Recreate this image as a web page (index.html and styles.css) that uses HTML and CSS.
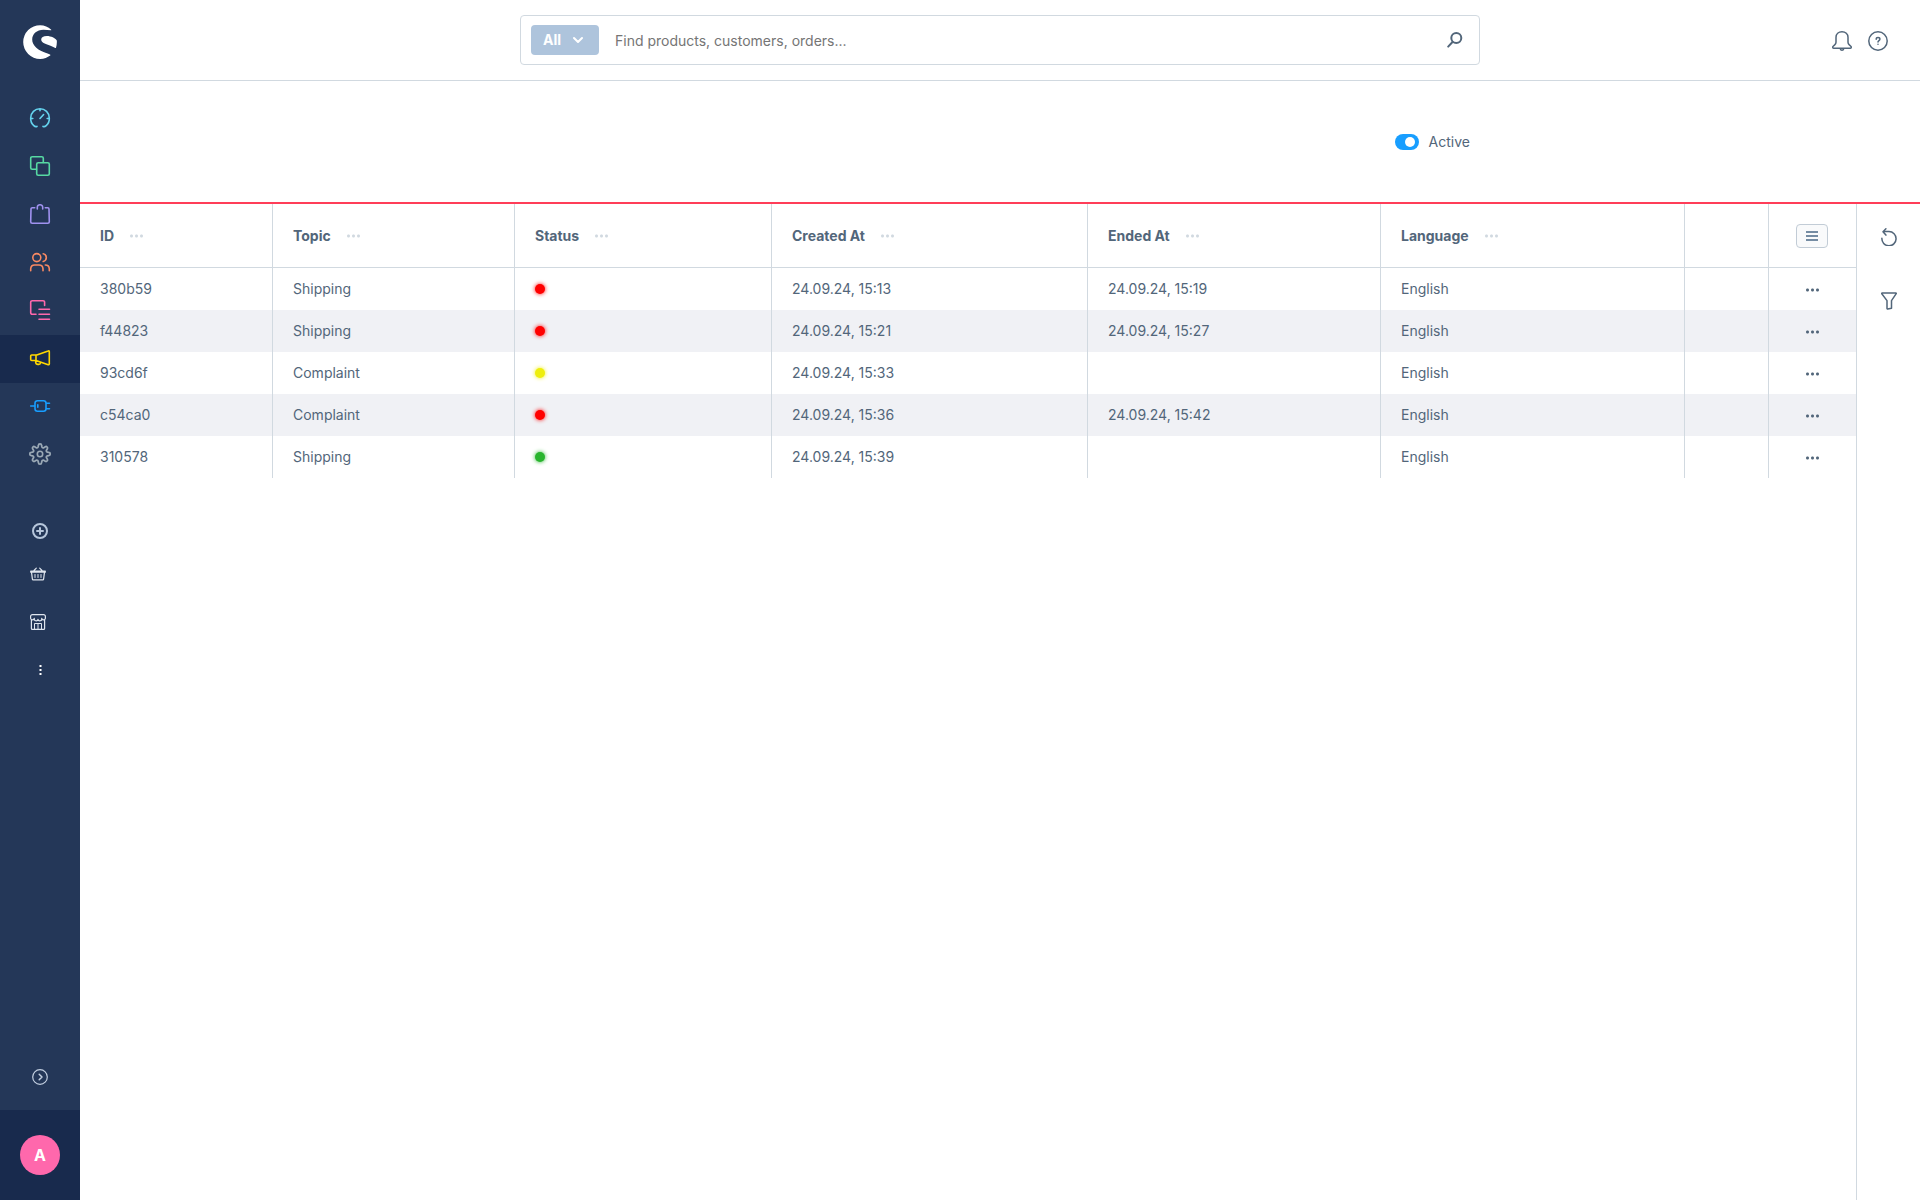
FILE: index.html
```html
<!DOCTYPE html>
<html lang="en">
<head>
<meta charset="utf-8">
<meta name="viewport" content="width=device-width, initial-scale=1">
<title>Administration</title>
<link rel="stylesheet" href="styles.css">
</head>
<body>
<div class="app">
  <aside class="menu">
    <a class="menu-logo" href="#" aria-label="Home">
      <svg width="34" height="34" viewBox="0 0 34 34" fill="#fff"><path d="M28 4.600C25.200 1.800 21.500 .2 17.200 .2A16.900 16.900 0 0 0 .2 17a16.900 16.900 0 0 0 17 16.900c3.900 0 7.400-1.400 10-3.400.3-.2.200-.7-.2-.9-6.600-2.700-10.500-3.900-13.700-6.800-2.700-2.400-4.100-5.200-4.100-8.200 0-5.500 4.500-9.800 11.300-9.800 2.400 0 5 .2 7.500.5.300 0 .4-.4 0-.7z"/><path d="M33.800 15.400c-1.600-2.200-5.700-4.400-9.900-4.400-3.600 0-5.700 1.300-5.700 3.500 0 1.700 1.200 2.900 3.500 4 2.800 1.300 7.600 2.700 10.600 4.400.3.200.6.100.7-.2.700-2.200 1-4.600.8-7.300z"/></svg>
    </a>
    <nav class="menu-main" aria-label="Main">
      <a class="menu-item cyan" href="#" aria-label="Dashboard"><svg class="icon" viewBox="0 0 20 20"><path d="M7 18.400c-1.200.500-2.300.1-3.200-.8A9.300 9.300 0 0 1 .7 10a9.300 9.300 0 0 1 18.600 0 9.300 9.300 0 0 1-3.100 7.600c-.9.900-2 1.300-3.200.8M10 .8v2M.8 10.500h2M17.200 10.500h2M10 10.500l3.600-4"/></svg></a>
      <a class="menu-item green" href="#" aria-label="Catalogues"><svg class="icon" viewBox="0 0 20 20"><rect x="6.700" y="6.700" width="12.600" height="12.600" rx="1.500"/><path d="M6.500 13.300H2.200a1.500 1.500 0 0 1-1.500-1.500V2.200A1.500 1.500 0 0 1 2.200.7h9.600a1.500 1.500 0 0 1 1.500 1.500v4.300"/></svg></a>
      <a class="menu-item violet" href="#" aria-label="Orders"><svg class="icon" viewBox="0 0 20 20"><path d="M4.700 3.700H2.300A1.300 1.300 0 0 0 1 5L.7 17.800a1.500 1.500 0 0 0 1.500 1.500h15.600a1.500 1.500 0 0 0 1.500-1.500L19 5a1.300 1.300 0 0 0-1.300-1.300h-2.400M7.300 5V3.200A2.500 2.500 0 0 1 10 .8a2.500 2.500 0 0 1 2.700 2.400V5"/></svg></a>
      <a class="menu-item orange" href="#" aria-label="Customers"><svg class="icon" viewBox="0 0 20 20"><circle cx="6.800" cy="5.600" r="4"/><path d="M.7 18.800v-2.100a4 4 0 0 1 4-3.700H9a4 4 0 0 1 4 3.700v2.100M13.200 1.700a4 4 0 0 1 0 7.800M15.300 13a4 4 0 0 1 4 3.700v2.100"/></svg></a>
      <a class="menu-item pink" href="#" aria-label="Content"><svg class="icon" viewBox="0 0 20 20"><path d="M6 14.300H2.200a1.500 1.500 0 0 1-1.500-1.500V2.200A1.500 1.500 0 0 1 2.200.7h10.900a1.500 1.500 0 0 1 1.500 1.500v3.300M9 9.300h10.500M9 14.300h10.500M9 19.300h10.500"/></svg></a>
      <a class="menu-item yellow active" href="#" aria-label="Marketing" aria-current="page"><svg class="icon" viewBox="0 0 20 20"><path d="M1.700 7H6v5.500H1.700a1 1 0 0 1-1-1V8a1 1 0 0 1 1-1zM6 7.200l12.200-4.300a.8.8 0 0 1 1.100.8v12.200a.8.8 0 0 1-1.100.8L6 12.500M5.700 12.700v1.500A2.300 2.300 0 0 0 8 16.400h.7a1.800 1.800 0 0 0 1.800-1.700v-.6"/></svg></a>
      <a class="menu-item blue" href="#" aria-label="Extensions"><svg class="icon" viewBox="0 0 20 20"><path d="M.7 10h4M7.500 4.700h6a2.500 2.500 0 0 1 2.500 2.500v5.600a2.500 2.500 0 0 1-2.500 2.500h-6a2.500 2.500 0 0 1-2.500-2.500V7.200a2.500 2.500 0 0 1 2.500-2.500zM16 7.300h3.500M16 12.700h3.500M7.800 8.800v2.400"/></svg></a>
      <a class="menu-item grey" href="#" aria-label="Settings"><svg class="icon" viewBox="0 0 20 20"><circle cx="10" cy="10" r="2.700"/><path d="M8.600 2.100a1.400 1.400 0 0 1 2.800 0l.3 1.300a1.300 1.300 0 0 0 1.900.8l1.200-.8a1.400 1.400 0 0 1 1.900 1.900l-.8 1.200a1.300 1.300 0 0 0 .8 1.900l1.200.2a1.400 1.400 0 0 1 0 2.800l-1.200.2a1.300 1.300 0 0 0-.8 1.900l.8 1.200a1.400 1.400 0 0 1-1.900 1.900l-1.200-.8a1.300 1.300 0 0 0-1.900.8l-.3 1.300a1.400 1.400 0 0 1-2.800 0l-.3-1.300a1.300 1.300 0 0 0-1.900-.8l-1.200.8a1.400 1.400 0 0 1-1.900-1.900l.8-1.200a1.300 1.300 0 0 0-.8-1.900l-1.200-.2a1.400 1.400 0 0 1 0-2.800l1.200-.2a1.300 1.300 0 0 0 .8-1.900l-.8-1.200a1.400 1.400 0 0 1 1.900-1.900l1.200.8a1.300 1.300 0 0 0 1.900-.8z" transform="translate(10 10) scale(1.100) translate(-10 -10)"/></svg></a>
    </nav>
    <nav class="menu-channels" aria-label="Sales channels">
      <button class="menu-add" type="button" aria-label="Add sales channel"><svg width="16" height="16" viewBox="0 0 16 16" fill="none" stroke="#b6c6db" stroke-width="2" stroke-linecap="round"><circle cx="8" cy="8" r="7"/><path d="M8 5v6M5 8h6"/></svg></button>
      <a class="menu-channel" href="#" aria-label="Storefront basket"><svg width="16" height="16" viewBox="0 0 16 16" fill="none" stroke="#dfe5ee" stroke-width="1.200" stroke-linecap="round" stroke-linejoin="round"><path d="M.7 5h14.600v1.200H.7zM1.500 6.200l.9 6.900a.8.8 0 0 0 .8.700h9.600a.8.8 0 0 0 .8-.7l.9-6.900M4 4.500l2.300-2.300M12 4.500L9.700 2.200"/><path d="M5 8.500v3M8 8.500v3M11 8.500v3" stroke-width="1"/></svg></a>
      <a class="menu-channel" href="#" aria-label="Storefront"><svg width="16" height="16" viewBox="0 0 16 16" fill="none" stroke="#dfe5ee" stroke-width="1.200" stroke-linecap="round" stroke-linejoin="round"><path d="M1.400 6v8.400a1 1 0 0 0 1 1h11.200a1 1 0 0 0 1-1V6M2.400.6h11.200a1.800 1.800 0 0 1 1.800 1.800v2a1.900 1.900 0 0 1-3.700 0 1.900 1.900 0 0 1-3.700 1 1.900 1.900 0 0 1-3.700-1 1.900 1.900 0 0 1-3.700 0v-2A1.800 1.800 0 0 1 2.400.6z"/><path d="M4.500 15.200V9.500h7v5.700M8 9.500v5.700" stroke-width="1"/></svg></a>
      <button class="menu-more" type="button" aria-label="More"><svg width="16" height="16" viewBox="0 0 16 16" fill="#fff"><path d="M7.500 3h2v2h-2zM7.500 7h2v2h-2zM7.500 11h2v2h-2z"/></svg></button>
    </nav>
    <button class="menu-expand" type="button" aria-label="Expand menu"><svg width="16" height="16" viewBox="0 0 16 16" fill="none" stroke="#c3cfe0" stroke-width="1.200" stroke-linecap="round" stroke-linejoin="round"><circle cx="8" cy="8" r="7.300"/><path d="M7.200 5.200L10 8l-2.800 2.800" stroke-width="1.500"/></svg></button>
    <div class="menu-user"><button class="avatar" type="button" aria-label="User menu">A</button></div>
  </aside>

  <div class="page">
    <header class="topbar">
      <form class="search" role="search">
        <button class="search-type" type="button">All
          <svg width="10" height="8" viewBox="0 0 10 8" fill="none" stroke="#fff" stroke-width="2" stroke-linecap="round" stroke-linejoin="round"><path d="M1 2l4 4 4-4"/></svg>
        </button>
        <input class="search-input" type="text" aria-label="Search" placeholder="Find products, customers, orders...">
        <button class="plain" type="submit" aria-label="Search"><svg width="16" height="16" viewBox="0 0 16 16" fill="none" stroke="#52667a" stroke-width="2" stroke-linecap="round"><circle cx="9.300" cy="6" r="5"/><path d="M5.500 10L1.200 14.600"/></svg></button>
      </form>
      <div class="topbar-actions">
        <button class="plain" type="button" aria-label="Notifications"><svg width="20" height="20" viewBox="0 0 20 20" fill="none" stroke="#52667a" stroke-width="1.500" stroke-linecap="round" stroke-linejoin="round"><path d="M10 .8c-3.500 0-6 2.200-6 5.500v5c0 1.200-.4 1.900-1.300 2.600l-1.500 1.300c-.9.800-.5 2 .6 2h16.400c1.100 0 1.500-1.200.6-2l-1.500-1.300c-.9-.7-1.300-1.400-1.300-2.600v-5C16 3 13.500.8 10 .8z"/><path d="M8.300 17.800c.2.900.8 1.400 1.700 1.400s1.500-.5 1.700-1.400"/></svg></button>
        <button class="plain" type="button" aria-label="Help"><svg width="20" height="20" viewBox="0 0 20 20" fill="none" stroke="#52667a" stroke-width="1.500" stroke-linecap="round" stroke-linejoin="round"><circle cx="10" cy="10" r="9.200"/><path d="M8.200 8.300c0-1.100.8-1.700 1.800-1.700s1.900.6 1.900 1.600c0 1.300-1.900 1.400-1.900 2.700M10 13.200v.1"/></svg></button>
      </div>
    </header>

    <div class="smartbar">
      <label class="switch"><input class="switch-input" type="checkbox" checked> Active</label>
    </div>

    <main class="content">
      <div class="grid-wrap">
        <table class="grid">
          <colgroup><col class="c-id"><col class="c-topic"><col class="c-status"><col class="c-created"><col class="c-ended"><col class="c-lang"><col class="c-blank"><col class="c-actions"></colgroup>
          <thead>
            <tr>
              <th scope="col"><span class="head">ID <button class="dots" type="button" aria-label="ID options"></button></span></th>
              <th scope="col"><span class="head">Topic <button class="dots" type="button" aria-label="Topic options"></button></span></th>
              <th scope="col"><span class="head">Status <button class="dots" type="button" aria-label="Status options"></button></span></th>
              <th scope="col"><span class="head">Created At <button class="dots" type="button" aria-label="Created At options"></button></span></th>
              <th scope="col"><span class="head">Ended At <button class="dots" type="button" aria-label="Ended At options"></button></span></th>
              <th scope="col"><span class="head">Language <button class="dots" type="button" aria-label="Language options"></button></span></th>
              <td></td>
              <td class="actions"><button class="columns" type="button" aria-label="Table settings"><svg width="12" height="10" viewBox="0 0 12 10" fill="#758ca3"><path d="M0 0h12v2H0zM0 4h12v2H0zM0 8h12v2H0z"/></svg></button></td>
            </tr>
          </thead>
          <tbody>
            <tr><td>380b59</td><td>Shipping</td><td><span class="status red" role="img" aria-label="Closed"></span></td><td>24.09.24, 15:13</td><td>24.09.24, 15:19</td><td>English</td><td></td><td class="actions"><button class="dots dark" type="button" aria-label="Row actions"></button></td></tr>
            <tr><td>f44823</td><td>Shipping</td><td><span class="status red" role="img" aria-label="Closed"></span></td><td>24.09.24, 15:21</td><td>24.09.24, 15:27</td><td>English</td><td></td><td class="actions"><button class="dots dark" type="button" aria-label="Row actions"></button></td></tr>
            <tr><td>93cd6f</td><td>Complaint</td><td><span class="status amber" role="img" aria-label="Waiting"></span></td><td>24.09.24, 15:33</td><td></td><td>English</td><td></td><td class="actions"><button class="dots dark" type="button" aria-label="Row actions"></button></td></tr>
            <tr><td>c54ca0</td><td>Complaint</td><td><span class="status red" role="img" aria-label="Closed"></span></td><td>24.09.24, 15:36</td><td>24.09.24, 15:42</td><td>English</td><td></td><td class="actions"><button class="dots dark" type="button" aria-label="Row actions"></button></td></tr>
            <tr><td>310578</td><td>Shipping</td><td><span class="status open" role="img" aria-label="Open"></span></td><td>24.09.24, 15:39</td><td></td><td>English</td><td></td><td class="actions"><button class="dots dark" type="button" aria-label="Row actions"></button></td></tr>
          </tbody>
        </table>
      </div>
      <aside class="rail">
        <button class="rail-button" type="button" aria-label="Refresh"><svg width="16" height="18" viewBox="0 0 16 18" fill="none" stroke="#52667a" stroke-width="1.500" stroke-linecap="round" stroke-linejoin="round"><path d="M.9 10.200A7.100 7.100 0 1 0 8 3.600H2.200M4.900.8L2 3.700l2.900 3.400"/></svg></button>
        <button class="rail-button" type="button" aria-label="Filter"><svg width="16" height="18" viewBox="0 0 16 18" fill="none" stroke="#52667a" stroke-width="1.500" stroke-linecap="round" stroke-linejoin="round"><path d="M1.100 1h13.800c.4 0 .5.400.3.700l-4.700 6.900v7.600l-3.800.8c-.4.100-.7-.1-.7-.5V8.600L.8 1.700C.6 1.400.7 1 1.100 1z"/></svg></button>
      </aside>
    </main>
  </div>
</div>
</body>
</html>
```
FILE: styles.css
```css
* { box-sizing: border-box; }

body {
  margin: 0;
  background: #fff;
  color: #52667a;
  font: 14px/20px Inter, "Liberation Sans", sans-serif;
}

button {
  margin: 0;
  padding: 0;
  border: 0;
  background: none;
  color: inherit;
  font: inherit;
  cursor: pointer;
}

svg { display: block; }

.app { display: flex; min-height: 100vh; }

/* Main menu */
.menu {
  display: flex;
  flex-direction: column;
  flex: none;
  width: 80px;
  background: #243758;
}

.menu-logo { padding: 25px 23px 36px; }

.menu-item {
  display: flex;
  justify-content: center;
  height: 48px;
  padding-top: 13px;
}

.menu-item.active { background: #182a4d; }

.icon {
  width: 20px;
  height: 20px;
  fill: none;
  stroke: currentColor;
  stroke-width: 1.6;
  stroke-linecap: round;
  stroke-linejoin: round;
  overflow: visible;
}

.cyan { color: #65d3ee; }
.green { color: #57d9a3; }
.violet { color: #a092f0; }
.orange { color: #f88962; }
.pink { color: #ff68ac; }
.yellow { color: #ffd700; }
.blue { color: #189eff; }
.grey { color: #9aa8b5; }

.menu-channels {
  display: flex;
  flex-direction: column;
  margin-top: 33px;
}

.menu-add,
.menu-channel,
.menu-more {
  display: flex;
  align-items: center;
  justify-content: center;
  height: 48px;
}

.menu-add { height: 38px; }

.menu-channel { justify-content: flex-start; padding-left: 30px; }

.menu-expand {
  display: flex;
  justify-content: center;
  margin-top: auto;
  padding: 16px 0 25px;
}

.menu-user {
  display: flex;
  justify-content: center;
  padding: 25px 0;
  background: #182a4d;
}

.avatar {
  width: 40px;
  height: 40px;
  border-radius: 50%;
  background: #ff68ac;
  color: #fff;
  font-size: 16px;
  font-weight: 700;
}

/* Page */
.page {
  display: flex;
  flex: 1;
  flex-direction: column;
  min-width: 0;
}

.topbar,
.smartbar {
  display: grid;
  grid-template-columns: 1fr minmax(0, 960px) 1fr;
  align-items: center;
}

.topbar { padding: 15px 0; border-bottom: 1px solid #d1d9e0; }

.search {
  display: flex;
  align-items: center;
  grid-column: 2;
  height: 50px;
  padding: 0 16px 0 10px;
  border: 1px solid #d1d9e0;
  border-radius: 4px;
}

.search-type {
  display: flex;
  align-items: center;
  gap: 12px;
  width: 68px;
  height: 30px;
  padding-left: 12px;
  border-radius: 4px;
  background: #aec4dc;
  color: #fff;
  font-weight: 700;
}

.search-input {
  flex: 1;
  min-width: 0;
  height: 30px;
  padding: 0 16px;
  border: 0;
  outline: 0;
  background: none;
  color: inherit;
  font: inherit;
}

.search-input::placeholder { color: #757575; }

.topbar-actions {
  display: flex;
  justify-content: flex-end;
  gap: 16px;
  padding: 2px 32px 0 0;
}

.smartbar {
  height: 123px;
  border-bottom: 2px solid #ff3d58;
}

.switch {
  display: flex;
  align-items: center;
  grid-column: 2;
  justify-self: end;
  gap: 10px;
  padding-right: 10px;
}

.switch-input {
  display: flex;
  align-items: center;
  justify-content: flex-end;
  appearance: none;
  width: 24px;
  height: 16px;
  margin: 0;
  padding-right: 4px;
  border-radius: 8px;
  background: #189eff;
}

.switch-input::before {
  content: "";
  width: 10px;
  height: 10px;
  border-radius: 50%;
  background: #fff;
}

.switch-input:not(:checked) {
  justify-content: flex-start;
  padding: 0 0 0 4px;
  background: #c2ccd6;
}

.content { display: flex; flex: 1; }

.grid-wrap { flex: 1; min-width: 0; }

/* Data grid */
.grid {
  width: 100%;
  table-layout: fixed;
  border-collapse: separate;
  border-spacing: 0;
}

.c-id { width: 193px; }
.c-topic { width: 242px; }
.c-status { width: 257px; }
.c-created { width: 316px; }
.c-ended { width: 293px; }
.c-lang { width: 304px; }
.c-blank { width: 84px; }
.c-actions { width: 87px; }

.grid th,
.grid td {
  height: 42px;
  padding: 0 20px;
  border-right: 1px solid #d1d9e0;
  text-align: left;
}

.grid thead th,
.grid thead td { height: 64px; border-bottom: 1px solid #d1d9e0; }

.grid thead th { padding-top: 1px; }

.grid th { font-weight: 700; }

.grid tbody tr:nth-child(even) { background: #f0f1f5; }

.grid .actions { border-right: 0; padding: 0 1px 0 0; text-align: center; }

.head { display: flex; align-items: center; gap: 15px; }

.dots {
  width: 15px;
  height: 4px;
  background: radial-gradient(circle, #d1d9e0 1px, transparent 2px) 0 0 / 5px 4px;
}

.dots.dark {
  background-image: radial-gradient(circle, #52667a 1px, transparent 2px);
  vertical-align: middle;
}

.columns {
  display: inline-flex;
  align-items: center;
  justify-content: center;
  width: 32px;
  height: 24px;
  border: 1px solid #c2ccd6;
  border-radius: 4px;
  background: #f9fafb;
  vertical-align: middle;
}

.status {
  display: block;
  width: 10px;
  height: 10px;
  border-radius: 50%;
  background: currentColor;
  box-shadow: 0 0 4px currentColor;
}

.red { color: #f00; }
.amber { color: #eeee0c; }
.open { color: #28b42d; }

.rail {
  display: flex;
  flex: none;
  flex-direction: column;
  width: 64px;
  padding-top: 1px;
  border-left: 1px solid #d1d9e0;
}

.rail-button {
  display: flex;
  align-items: center;
  justify-content: center;
  height: 64px;
}
```
